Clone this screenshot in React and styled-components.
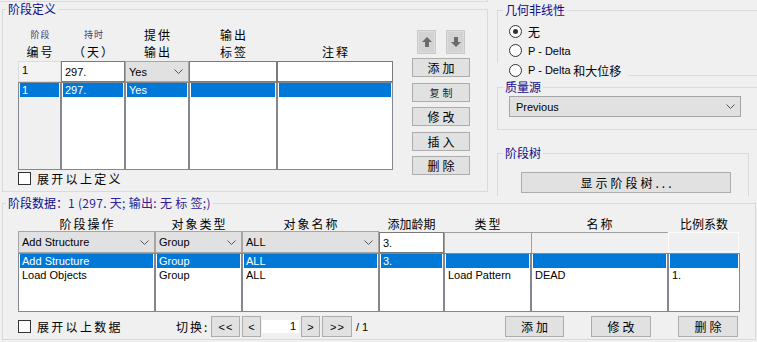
import React from "react";
import styled, { createGlobalStyle } from "styled-components";

const GlobalStyle = createGlobalStyle`
  html, body {
    margin: 0;
    padding: 0;
    overflow: hidden;
    background: #f0f0f0;
  }
`;

const CJK = `"Noto Sans CJK SC", "Liberation Sans", sans-serif`;
const LATIN = `"Liberation Sans", "Noto Sans CJK SC", sans-serif`;

const Chevron = () => (
  <svg width="9" height="5" viewBox="0 0 9 5">
    <polyline points="0.5,0.5 4.5,4.5 8.5,0.5" fill="none" stroke="#555" strokeWidth="1" />
  </svg>
);

const ArrowIcon = ({ down }) => (
  <svg width="10" height="10" viewBox="0 0 10 10" style={down ? { transform: "rotate(180deg)" } : undefined}>
    <polygon points="5,0 10,5 0,5" fill="#6b6b6b" />
    <rect x="3" y="5" width="4" height="5" fill="#6b6b6b" />
  </svg>
);

const StageRows = [{ no: "1", dur: "297.", out: "Yes", tag: "", note: "" }];

const DataRows = [
  { op: "Add Structure", type: "Group", name: "ALL", age: "3.", kind: "", lname: "", sf: "", sel: true },
  { op: "Load Objects", type: "Group", name: "ALL", age: "", kind: "Load Pattern", lname: "DEAD", sf: "1." },
];

const App = () => {
  return (
    <>
      <GlobalStyle />
      <Window>
        <TopArea>
          <LeftCol>
            <TopEdge />
            <StageGroup>
              <Legend $ml={3}>阶段定义</Legend>
              <StageBody>
                <div>
                  <StageTable>
                    <HeadCell>
                      <Small>阶段</Small>
                      <span>编号</span>
                    </HeadCell>
                    <HeadCell>
                      <Small>持时</Small>
                      <span>（天）</span>
                    </HeadCell>
                    <HeadCell>
                      <span>提供</span>
                      <span>输出</span>
                    </HeadCell>
                    <HeadCell>
                      <span>输出</span>
                      <span>标签</span>
                    </HeadCell>
                    <HeadCell>
                      <span>注释</span>
                    </HeadCell>

                    <ReadCell>1</ReadCell>
                    <TextBox>297.</TextBox>
                    <Combo>
                      <span>Yes</span>
                      <Chevron />
                    </Combo>
                    <TextBox />
                    <TextBox />

                    <List $bg="#f0f0f0">
                      {StageRows.map((r) => (
                        <ListRow key={r.no} $selected>{r.no}</ListRow>
                      ))}
                    </List>
                    <List>
                      {StageRows.map((r) => (
                        <ListRow key={r.no} $selected>{r.dur}</ListRow>
                      ))}
                    </List>
                    <List>
                      {StageRows.map((r) => (
                        <ListRow key={r.no} $selected>{r.out}</ListRow>
                      ))}
                    </List>
                    <List>
                      {StageRows.map((r) => (
                        <ListRow key={r.no} $selected>{r.tag}</ListRow>
                      ))}
                    </List>
                    <List>
                      {StageRows.map((r) => (
                        <ListRow key={r.no} $selected>{r.note}</ListRow>
                      ))}
                    </List>
                  </StageTable>
                  <CheckLabel $mt={2}>
                    <CheckBox />
                    <span>展开以上定义</span>
                  </CheckLabel>
                </div>

                <SideButtons>
                  <ArrowRow>
                    <ArrowButton>
                      <ArrowIcon />
                    </ArrowButton>
                    <ArrowButton>
                      <ArrowIcon down />
                    </ArrowButton>
                  </ArrowRow>
                  <Button $w={58} $h={19}>添加</Button>
                  <Button $w={58} $h={19} $small>复制</Button>
                  <Button $w={58} $h={19}>修改</Button>
                  <Button $w={58} $h={19}>插入</Button>
                  <Button $w={58} $h={19}>删除</Button>
                </SideButtons>
              </StageBody>
            </StageGroup>
          </LeftCol>

          <RightCol>
            <GeoGroup>
              <Legend $ml={5}>几何非线性</Legend>
              <RadioList>
                <RadioRow>
                  <Radio $checked />
                  <span>无</span>
                </RadioRow>
                <RadioRow>
                  <Radio />
                  <Latin>P - Delta</Latin>
                </RadioRow>
                <LastRadioRow>
                  <Radio />
                  <Latin>P - Delta</Latin>
                  <span>&nbsp;和大位移</span>
                </LastRadioRow>
              </RadioList>
            </GeoGroup>

            <MassGroup>
              <Legend $ml={5}>质量源</Legend>
              <MassBody>
                <Combo $w={232} $h={21} $pad={6}>
                  <span>Previous</span>
                  <Chevron />
                </Combo>
              </MassBody>
            </MassGroup>

            <TreeGroup>
              <Legend $ml={5}>阶段树</Legend>
              <TreeBody>
                <Button $w={210} $h={21} $spacing={3}>显示阶段树...</Button>
              </TreeBody>
            </TreeGroup>
          </RightCol>
        </TopArea>

        <DataGroup>
          <Legend $ml={3}>
            阶段数据：<Summary>1 (297. 天; 输出: 无 标 签;)</Summary>
          </Legend>
          <DataBody>
            <DataTable>
              <HeadCell $spacing={2}>阶段操作</HeadCell>
              <HeadCell $spacing={2}>对象类型</HeadCell>
              <HeadCell $spacing={2}>对象名称</HeadCell>
              <HeadCell $spacing={0}>添加龄期</HeadCell>
              <HeadCell $spacing={2}>类型</HeadCell>
              <HeadCell $spacing={2}>名称</HeadCell>
              <HeadCell $spacing={0}>比例系数</HeadCell>

              <Combo>
                <span>Add Structure</span>
                <Chevron />
              </Combo>
              <Combo>
                <span>Group</span>
                <Chevron />
              </Combo>
              <Combo>
                <span>ALL</span>
                <Chevron />
              </Combo>
              <TextBox $inset>3.</TextBox>
              <FlatCell />
              <FlatCell />
              <DisabledCell />

              {["op", "type", "name", "age", "kind", "lname", "sf"].map((key) => (
                <List key={key}>
                  {DataRows.map((r, i) => (
                    <ListRow key={i} $selected={r.sel}>{r[key]}</ListRow>
                  ))}
                </List>
              ))}
            </DataTable>

            <BottomBar>
              <CheckLabel $w={158}>
                <CheckBox />
                <span>展开以上数据</span>
              </CheckLabel>
              <Pager>
                <PagerLabel>切换:</PagerLabel>
                <Button $w={29} $h={21} $latin $ml={4}>&lt;&lt;</Button>
                <Button $w={19} $h={21} $latin $ml={2}>&lt;</Button>
                <PageInput>1</PageInput>
                <Button $w={19} $h={21} $latin $ml={2}>&gt;</Button>
                <Button $w={30} $h={21} $latin $ml={2}>&gt;&gt;</Button>
                <PageTotal>/ 1</PageTotal>
              </Pager>
              <Actions>
                <Button $w={59} $h={21}>添加</Button>
                <Button $w={60} $h={21}>修改</Button>
                <Button $w={60} $h={21}>删除</Button>
              </Actions>
            </BottomBar>
          </DataBody>
        </DataGroup>
      </Window>
    </>
  );
};

const Window = styled.div`
  width: 757px;
  height: 342px;
  overflow: hidden;
  background: #f0f0f0;
  font-family: ${CJK};
  font-size: 12px;
  color: #000;
  display: flex;
  flex-direction: column;
`;

const TopArea = styled.div`
  display: flex;
  height: 196px;
`;

const LeftCol = styled.div`
  width: 488px;
  flex: none;
`;

const TopEdge = styled.div`
  height: 2px;
  box-sizing: border-box;
  border-bottom: 1px solid #dadada;
  border-right: 1px solid #dadada;
`;

const Group = styled.fieldset`
  margin: 0;
  padding: 0;
  border: 1px solid #dadada;
  box-sizing: border-box;
  min-width: 0;
`;

const Legend = styled.legend`
  margin-left: ${(p) => p.$ml}px;
  padding: 0 2px;
  font-family: ${CJK};
  font-size: 12px;
  line-height: 14px;
  color: #0c0c8a;
`;

const Summary = styled.span`
  color: #2e2296;
  letter-spacing: 0.3px;
`;

const StageGroup = styled(Group)`
  margin-left: 2px;
  width: 486px;
  height: 190px;
`;

const StageBody = styled.div`
  display: flex;
  padding-left: 15px;
  gap: 19px;
`;

const StageTable = styled.div`
  display: grid;
  grid-template-columns: 43px 64px 64px 88px 116px;
  grid-template-rows: 45px 21px 88px;
`;

const HeadCell = styled.div`
  display: flex;
  flex-direction: column;
  align-items: center;
  justify-content: flex-end;
  padding-bottom: ${(p) => (p.$spacing !== undefined ? 0 : 1)}px;
  line-height: ${(p) => (p.$spacing !== undefined ? 15 : 17)}px;
  letter-spacing: ${(p) => (p.$spacing !== undefined ? p.$spacing : 2)}px;
  text-indent: ${(p) => (p.$spacing !== undefined ? p.$spacing : 2)}px;
  white-space: nowrap;
`;

const Small = styled.span`
  font-size: 9px;
  color: #3a3a70;
  letter-spacing: 1px;
`;

const cellBase = `
  box-sizing: border-box;
  font-family: ${LATIN};
  font-size: 11px;
  display: flex;
  align-items: center;
  white-space: nowrap;
  overflow: hidden;
`;

const ReadCell = styled.div`
  ${cellBase}
  background: #f3f3f3;
  border: 1px solid #dcdcdc;
  padding-left: 3px;
  align-items: flex-start;
  padding-top: 2px;
`;

const TextBox = styled.div`
  ${cellBase}
  background: #fff;
  border: 1px solid #7a7a7a;
  padding-left: 3px;
  margin: ${(p) => (p.$inset ? "1px 0 0 0" : "0")};
`;

const Combo = styled.div`
  ${cellBase}
  justify-content: space-between;
  background: #e1e1e1;
  border: 1px solid #a5a5a5;
  padding: 0 5px 0 ${(p) => (p.$pad !== undefined ? p.$pad : 3)}px;
  width: ${(p) => (p.$w ? `${p.$w}px` : "auto")};
  height: ${(p) => (p.$h ? `${p.$h}px` : "auto")};
  font-size: 11px;
`;

const FlatCell = styled.div`
  margin-top: 1px;
  border-top: 1px solid #a0a0a0;
  border-left: 1px solid #a0a0a0;
  background: #f0f0f0;
`;

const DisabledCell = styled.div`
  margin: 1px 1px 1px 0;
  border: 1px solid #fbfbfb;
  background: #efefef;
`;

const List = styled.div`
  box-sizing: border-box;
  border: 1px solid #828790;
  background: ${(p) => p.$bg || "#fff"};
  padding: 0 1px;
  overflow: hidden;
`;

const ListRow = styled.div`
  height: 14px;
  line-height: 14px;
  padding-left: 2px;
  font-family: ${LATIN};
  font-size: 11px;
  white-space: nowrap;
  background: ${(p) => (p.$selected ? "#0078d7" : "transparent")};
  color: ${(p) => (p.$selected ? "#fff" : "#000")};
`;

const CheckLabel = styled.label`
  display: flex;
  align-items: center;
  gap: 6px;
  height: 13px;
  margin-top: ${(p) => p.$mt || 0}px;
  width: ${(p) => (p.$w ? `${p.$w}px` : "auto")};
  flex: none;
  letter-spacing: 2.3px;
  line-height: 13px;
`;

const CheckBox = styled.span`
  width: 13px;
  height: 13px;
  box-sizing: border-box;
  border: 1px solid #333;
  background: #fff;
  flex: none;
`;

const SideButtons = styled.div`
  width: 58px;
  padding-top: 14px;
  display: flex;
  flex-direction: column;
  gap: 5.5px;
`;

const ArrowRow = styled.div`
  display: flex;
  justify-content: center;
  gap: 10px;
  margin-bottom: -1.5px;
`;

const ArrowButton = styled.div`
  width: 19px;
  height: 24px;
  box-sizing: border-box;
  background: #d3d3d3;
  border: 1px solid #cacaca;
  box-shadow: inset 0 0 0 1px #dcdcdc;
  display: flex;
  align-items: center;
  justify-content: center;
`;

const Button = styled.div`
  box-sizing: border-box;
  width: ${(p) => p.$w}px;
  height: ${(p) => p.$h}px;
  margin-left: ${(p) => p.$ml || 0}px;
  flex: none;
  background: #e1e1e1;
  border: 1px solid #adadad;
  display: flex;
  align-items: center;
  justify-content: center;
  font-family: ${(p) => (p.$latin ? LATIN : CJK)};
  font-size: ${(p) => (p.$small ? 10 : p.$latin ? 11 : 12)}px;
  color: ${(p) => (p.$small ? "#222" : "#000")};
  letter-spacing: ${(p) => (p.$latin ? 1 : p.$spacing !== undefined ? p.$spacing : 3)}px;
  text-indent: ${(p) => (p.$latin ? 1 : p.$spacing !== undefined ? p.$spacing : 3)}px;
  white-space: nowrap;
`;

const RightCol = styled.div`
  margin-left: 9px;
  width: 270px;
  flex: none;
`;

const GeoGroup = styled(Group)`
  margin-top: 3px;
  width: 270px;
`;

const RadioList = styled.div`
  padding-top: 5px;
  margin-bottom: -2px;
`;

const RadioRow = styled.div`
  display: flex;
  align-items: center;
  gap: 6px;
  height: 19px;
  padding-left: 11px;
`;

const LastRadioRow = styled(RadioRow)`
  position: relative;
  z-index: 1;
  width: fit-content;
  height: 14px;
  margin-top: 3px;
  margin-left: -1px;
  padding-left: 12px;
  padding-right: 7px;
  gap: 0;
  background: #f0f0f0;

  & > span:first-child {
    margin-right: 6px;
  }
`;

const Radio = styled.span`
  width: 13px;
  height: 13px;
  box-sizing: border-box;
  border-radius: 50%;
  border: 1px solid #333;
  background: #fff;
  flex: none;
  display: flex;
  align-items: center;
  justify-content: center;

  &::after {
    content: "";
    width: 5px;
    height: 5px;
    border-radius: 50%;
    background: ${(p) => (p.$checked ? "#333" : "transparent")};
  }
`;

const Latin = styled.span`
  font-family: ${LATIN};
  font-size: 11px;
`;

const MassGroup = styled(Group)`
  margin-top: 4px;
  width: 270px;
`;

const MassBody = styled.div`
  padding: 2px 0 12px 11px;
`;

const TreeGroup = styled(Group)`
  margin-top: 16px;
  width: 252px;
  height: 50px;
  border-bottom: none;
`;

const TreeBody = styled.div`
  padding: 12px 0 0 23px;
`;

const DataGroup = styled(Group)`
  margin-left: 2px;
  width: 754px;
  height: 144px;
`;

const DataBody = styled.div`
  padding-left: 15px;
`;

const DataTable = styled.div`
  display: grid;
  grid-template-columns: 137px 87px 137px 65px 87px 137px 72px;
  grid-template-rows: 21px 22px 59px;
`;

const BottomBar = styled.div`
  display: flex;
  align-items: center;
  width: 722px;
  margin-top: 4px;
  height: 21px;
`;

const Pager = styled.div`
  display: flex;
  align-items: center;
`;

const PagerLabel = styled.span`
  letter-spacing: 2px;
  width: 31px;
  white-space: nowrap;
`;

const PageInput = styled.div`
  width: 37px;
  height: 13px;
  margin-left: 1px;
  background: #fff;
  font-family: ${LATIN};
  font-size: 11px;
  line-height: 13px;
  text-align: right;
  padding-right: 3px;
  box-sizing: border-box;
`;

const PageTotal = styled.span`
  margin-left: 4px;
  font-family: ${LATIN};
  font-size: 11px;
`;

const Actions = styled.div`
  margin-left: auto;
  margin-right: 2px;
  display: flex;
  gap: 27px;
`;

export default App;
